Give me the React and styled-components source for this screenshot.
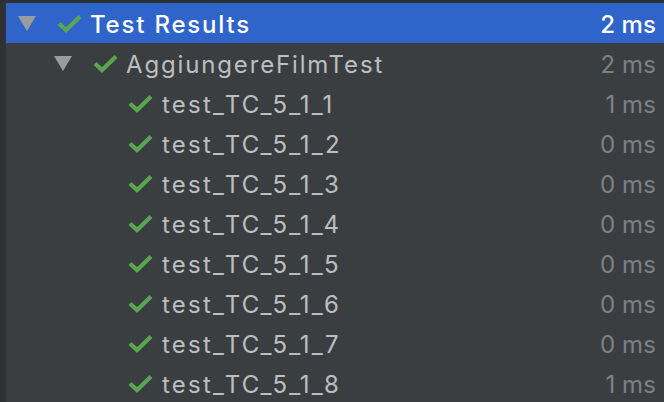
import React from "react";
import styled, { createGlobalStyle } from "styled-components";

const Global = createGlobalStyle`
  html, body { margin: 0; padding: 0; background: #3b3e41; }
  body { width: 664px; height: 402px; overflow: hidden; }
`;

const Frame = styled.div`
  display: flex;
  width: 664px;
  height: 402px;
  background: #2b2d30;
  font-family: Inter, "Noto Sans", sans-serif;
`;

const Gutter = styled.div`
  width: 5px;
  flex: none;
  background: #2e3033;
  border-right: 1px solid #323437;
`;

const Tree = styled.div`
  flex: 1;
  display: flex;
  flex-direction: column;
  padding-top: 3px;
  background: #3b3e41;
  box-shadow: inset 0 3px 0 #2e3033;
`;

const Row = styled.div`
  display: flex;
  align-items: center;
  height: 40px;
  flex: none;
  padding-left: ${(p) => p.$indent}px;
  padding-right: 8px;
  background: ${(p) => (p.$selected ? "#2f65ca" : "transparent")};
`;

const Arrow = styled.svg`
  width: 18px;
  height: 15px;
  flex: none;
  margin-right: ${(p) => p.$gap}px;
`;

const Check = styled.svg`
  width: 25px;
  height: 19px;
  flex: none;
  margin-right: ${(p) => p.$gap}px;
`;

const Name = styled.span`
  flex: 1;
  padding-top: 3px;
  font-size: 24px;
  font-weight: ${(p) => (p.$selected ? 500 : 400)};
  color: ${(p) => (p.$selected ? "#ffffff" : "#bcbec0")};
  white-space: nowrap;
  letter-spacing: ${(p) => p.$track}px;
`;

const Time = styled.span`
  padding-top: 3px;
  font-size: 24px;
  font-weight: ${(p) => (p.$selected ? 500 : 400)};
  color: ${(p) => (p.$selected ? "#ffffff" : "#7e8184")};
  white-space: nowrap;
  letter-spacing: 0.1px;
`;

const TriangleIcon = ({ gap }) => (
  <Arrow $gap={gap} viewBox="0 0 18 15">
    <polygon points="0,0 18,0 9,15" fill="#9a9b9d" />
  </Arrow>
);

const CheckIcon = ({ gap }) => (
  <Check $gap={gap} viewBox="0 0 25 19">
    <polyline
      points="2,9.5 9,16 23,2.5"
      fill="none"
      stroke="#5aa54f"
      strokeWidth="4.2"
      strokeLinejoin="miter"
    />
  </Check>
);

const tests = [
  ["test_TC_5_1_1", "1 ms"],
  ["test_TC_5_1_2", "0 ms"],
  ["test_TC_5_1_3", "0 ms"],
  ["test_TC_5_1_4", "0 ms"],
  ["test_TC_5_1_5", "0 ms"],
  ["test_TC_5_1_6", "0 ms"],
  ["test_TC_5_1_7", "0 ms"],
  ["test_TC_5_1_8", "1 ms"],
];

export default function App() {
  return (
    <>
      <Global />
      <Frame>
        <Gutter />
        <Tree>
          <Row $selected $indent={12}>
            <TriangleIcon gap={21} />
            <CheckIcon gap={8} />
            <Name $selected $track={1.8}>Test Results</Name>
            <Time $selected>2 ms</Time>
          </Row>
          <Row $indent={48}>
            <TriangleIcon gap={21} />
            <CheckIcon gap={8} />
            <Name $track={1.85}>AggiungereFilmTest</Name>
            <Time>2 ms</Time>
          </Row>
          {tests.map(([n, t]) => (
            <Row key={n} $indent={122}>
              <CheckIcon gap={9} />
              <Name $track={2.2}>{n}</Name>
              <Time>{t}</Time>
            </Row>
          ))}
        </Tree>
      </Frame>
    </>
  );
}
